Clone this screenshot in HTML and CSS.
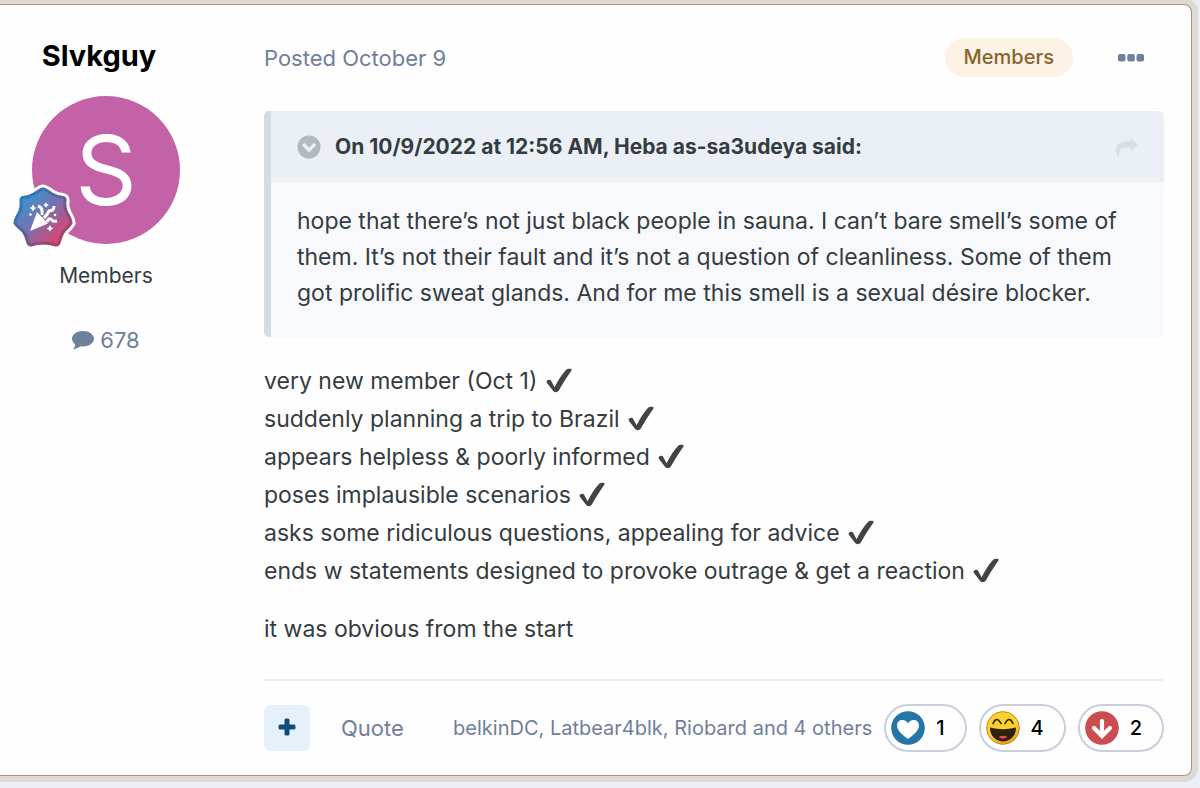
FILE: index.html
```
<!DOCTYPE html>
<html lang="en">
<head>
  <meta charset="UTF-8">
  <meta name="viewport" content="width=device-width, initial-scale=1.0">
  <title>Topic - Forum</title>
  <link rel="stylesheet" href="styles.css">
</head>
<body>
  <!-- Shared icons -->
  <svg class="sprite" aria-hidden="true">
    <symbol id="check" viewBox="0 0 26 26">
      <path d="M1.200 12.500C2.500 11.400 4.400 11.400 5.400 13.200L8.600 19.200C12.500 11.500 16.500 5.500 20.200 1.800C21.500.6 24 .4 25.200 1C25.900 1.500 25.500 2.500 25 3.200C20.500 9.500 16.500 16 13 22.300C11.800 24.500 8.400 25.200 6.800 22.600L1.200 15.200C.4 14 .4 13.200 1.200 12.500Z"/>
    </symbol>
  </svg>

  <article class="post">
    <aside class="author">
      <h3 class="author-name"><a href="#">Slvkguy</a></h3>
      <div class="avatar">
        <a href="#" class="avatar-letter">S</a>
        <svg class="rank" viewBox="0 0 70 70" role="img" aria-label="Rank badge">
          <defs>
            <linearGradient id="rankFill" x1="0.1" y1="0.1" x2="0.85" y2="0.9">
              <stop offset="0" stop-color="#2a9bd8"/>
              <stop offset="0.5" stop-color="#7a70ac"/>
              <stop offset="1" stop-color="#e5406a"/>
            </linearGradient>
            <path id="star" d="M35 9Q37 9 44 14Q49 17 55 17.500Q57 18 57 20Q56 27 59 33Q63 40 63 43Q62 45 56 51Q53 55 51 63Q50 65 48 65Q41 63 35.500 63Q29 63 23 65Q21 65 20 63Q18 55 15 51Q8 45 7 43Q7 40 11 33Q14 27 13 20Q13 18 15 17.500Q21 17 26 14Q33 9 35 9Z" stroke-linejoin="round"/>
          </defs>
          <use href="#star" fill="#fff" stroke="#fff" stroke-width="9"/>
          <use href="#star" fill="url(#rankFill)" stroke="url(#rankFill)" stroke-width="3"/>
          <use href="#star" fill="none" stroke="#243a70" stroke-opacity=".3" stroke-width="3"/>
          <g transform="translate(-1 4)">
            <path d="M30 28L41 39.500L23 47Z" fill="#fff"/>
            <path d="M31 22Q36 23 35 31M47 22Q47 27 42 27Q40 31 37 34M40 38Q42 33 45 36Q46 38 50 37" fill="none" stroke="#fff" stroke-width="3"/>
            <path d="M26 20.500l1.500 2.500 2 1-2 1-1.500 2.500-1.500-2.500-2-1 2-1zM39 18l1 2 2 1-2 1-1 2-1-2-2-1 2-1zM43 41l1.200 2.200 2.200 1.200-2.200 1.200-1.200 2.200-1.200-2.200-2.200-1.200 2.200-1.200z" fill="#fff"/>
            <circle cx="23.500" cy="30.500" r="1.300" fill="#fff"/>
            <circle cx="48" cy="31" r="1.300" fill="#fff"/>
          </g>
        </svg>
      </div>
      <p class="author-group">Members</p>
      <a href="#" class="author-posts">
        <svg width="22" height="20" viewBox="0 0 22 20" aria-hidden="true">
          <path d="M11 1C17 1 22 4.500 22 8.800S17 16.500 11 16.500Q9.500 16.500 8.200 16.300Q5.500 19 1.500 19.300Q1 19 1.500 18.500Q3.200 17 3.200 14.600Q0 12.200 0 8.800C0 4.500 5 1 11 1Z" fill="currentColor"/>
        </svg>
        678
      </a>
    </aside>

    <div class="content">
      <header class="post-head">
        <a href="#" class="date">Posted October 9</a>
        <span class="group-pill">Members</span>
        <button type="button" class="more" aria-label="More options">
          <svg width="26" height="8" viewBox="0 0 26 8" aria-hidden="true">
            <rect width="7.500" height="7.500" rx="2"/>
            <rect x="9.300" width="7.500" height="7.500" rx="2"/>
            <rect x="18.500" width="7.500" height="7.500" rx="2"/>
          </svg>
        </button>
      </header>

      <blockquote class="quote">
        <div class="quote-head">
          <button type="button" class="quote-toggle" aria-label="Collapse quote">
            <svg width="24" height="24" viewBox="0 0 24 24" aria-hidden="true">
              <circle cx="12" cy="12" r="11.500" fill="#b4b9bd"/>
              <path d="M6 9L12 15L18 9" fill="none" stroke="#ebf0f7" stroke-width="3.400"/>
            </svg>
          </button>
          <strong class="quote-cite">On 10/9/2022 at 12:56 AM, Heba as-sa3udeya said:</strong>
          <a href="#" class="quote-link" aria-label="Go to quoted post">
            <svg width="22" height="20" viewBox="0 0 22 20" aria-hidden="true">
              <path d="M14.500.5L21.800 7.500L14.500 14.500V10.500C8 10.200 3 10.500 3.200 19H1.500C.5 16.500 0 14.500 0 12C0 5.500 6 4.200 14.500 4.200Z" fill="#d9dee2"/>
            </svg>
          </a>
        </div>
        <p class="quote-body">hope that there’s not just black people in sauna. I can’t bare smell’s some of them. It’s not their fault and it’s not a question of cleanliness. Some of them got prolific sweat glands. And for me this smell is a sexual désire blocker.</p>
      </blockquote>

      <div class="text">
        <p>
          very new member (Oct 1) <svg class="check"><use href="#check"/></svg><br>
          suddenly planning a trip to Brazil <svg class="check"><use href="#check"/></svg><br>
          appears helpless &amp; poorly informed <svg class="check"><use href="#check"/></svg><br>
          poses implausible scenarios <svg class="check"><use href="#check"/></svg><br>
          asks some ridiculous questions, appealing for advice <svg class="check"><use href="#check"/></svg><br>
          ends w statements designed to provoke outrage &amp; get a reaction <svg class="check"><use href="#check"/></svg>
        </p>
        <p>it was obvious from the start</p>
      </div>

      <footer class="post-foot">
        <button type="button" class="multiquote" aria-label="Multiquote">
          <svg width="18" height="20" viewBox="0 0 18 20" aria-hidden="true">
            <path d="M8 .5h2q1.500 0 1.500 1.500v4.500h4.500q1.500 0 1.500 1.500v2q0 1.500-1.500 1.500h-4.500v4.500q0 1.500-1.500 1.500h-2q-1.500 0-1.500-1.500v-4.500h-4.500q-1.500 0-1.500-1.500v-2q0-1.500 1.500-1.500h4.500v-4.500q0-1.500 1.500-1.500z" fill="#0f4c7d"/>
          </svg>
        </button>
        <a href="#" class="quote-action">Quote</a>
        <a href="#" class="reactors">belkinDC, Latbear4blk, Riobard and 4 others</a>
        <ul class="reactions">
          <li>
            <button type="button" class="reaction">
              <svg width="34" height="34" viewBox="0 0 34 34" role="img" aria-label="Like">
                <circle cx="17" cy="17" r="16.800" fill="#2576a7"/>
                <path d="M17 28C13 25 6 20 6 14.500C6 11 8.500 9 11.300 9C14 9 16 10.500 17 12.500C18 10.500 20 9 22.700 9C25.500 9 28 11 28 14.500C28 20 21 25 17 28Z" fill="#fff"/>
              </svg>
              1
            </button>
          </li>
          <li>
            <button type="button" class="reaction">
              <svg width="34" height="34" viewBox="0 0 34 34" role="img" aria-label="Haha">
                <defs>
                  <linearGradient id="smile" x1=".3" y1="0" x2=".7" y2="1">
                    <stop offset=".55" stop-color="#fdd02a"/>
                    <stop offset="1" stop-color="#ef9a17"/>
                  </linearGradient>
                </defs>
                <circle cx="17" cy="17" r="16.400" fill="url(#smile)" stroke="#a77a2c" stroke-width=".8"/>
                <path d="M7 12.500Q10.500 4.500 15 12.500M19 12.500Q23.500 4.500 27 12.500" fill="none" stroke="#2d2410" stroke-width="1.600" stroke-linecap="round"/>
                <path d="M4 16.500Q17 20 30 16.500C30.500 24 24.500 30.500 17 30.500S3.500 24 4 16.500Z" fill="#2d2410"/>
                <path d="M13 26.500Q13.500 24 17 25Q20.500 24 21 26.500Q17 28.800 13 26.500Z" fill="#f2404f"/>
              </svg>
              4
            </button>
          </li>
          <li>
            <button type="button" class="reaction">
              <svg width="34" height="34" viewBox="0 0 34 34" role="img" aria-label="Downvote">
                <circle cx="17" cy="17" r="16.800" fill="#c84e50"/>
                <path d="M17 10V24M9 17L17 25L25 17" fill="none" stroke="#fff" stroke-width="4.200" stroke-linecap="round"/>
              </svg>
              2
            </button>
          </li>
        </ul>
      </footer>
    </div>
  </article>
</body>
</html>
```
FILE: styles.css
```
* {
  box-sizing: border-box;
}
body {
  margin: 0;
  padding: 4px 8px 12px 0;
  background: #eceef6;
  color: #353c41;
  font-family: Inter, "Liberation Sans", sans-serif;
  font-size: 22px;
  overflow-x: hidden;
}
h3, p, ul, blockquote {
  margin: 0;
  padding: 0;
}
a {
  color: inherit;
  text-decoration: none;
}
button {
  border: none;
  padding: 0;
  background: none;
  font: inherit;
  cursor: pointer;
}
svg {
  display: block;
}
.sprite {
  display: none;
}

.post {
  display: flex;
  gap: 52px;
  padding: 33px 27px 23px 0;
  background: #fefefe;
  border: 1px solid #ab946c;
  border-left: none;
  border-radius: 0 8px 8px 0;
  box-shadow: 0 0 0 6px #dcdad4;
}

/* Author column */
.author {
  flex: 0 0 212px;
  display: flex;
  flex-direction: column;
  align-items: center;
}
.author-name {
  padding-right: 14px;
  color: #000;
  font-size: 29px;
  font-weight: 700;
  line-height: 36px;
}
.avatar {
  position: relative;
  margin-top: 22px;
}
.avatar-letter {
  display: flex;
  align-items: center;
  justify-content: center;
  width: 148px;
  height: 148px;
  border-radius: 50%;
  background: #c462a8;
  color: #fff;
  font-size: 96px;
}
.rank {
  position: absolute;
  left: -24px;
  bottom: -6px;
  width: 70px;
  height: 70px;
}
.author-group {
  margin-top: 17px;
  font-size: 21px;
  line-height: 30px;
}
.author-posts {
  display: flex;
  align-items: center;
  gap: 6px;
  margin-top: 34px;
  color: #6f809b;
  line-height: 30px;
}

/* Post body */
.content {
  flex: 1;
  min-width: 0;
}
.post-head {
  display: flex;
  align-items: center;
}
.date {
  flex: 1;
  color: #6f809b;
}
.group-pill {
  padding: 0 19px;
  border-radius: 20px;
  background: #fdf2e4;
  color: #86652f;
  font-size: 20px;
  font-weight: 500;
  line-height: 39px;
}
.more {
  margin: 0 20px 0 45px;
  fill: #6f809b;
}
.quote {
  margin-top: 34px;
  border-left: 7px solid #d6dbe0;
  border-radius: 5px;
  background: #f7f9fc;
  overflow: hidden;
}
.quote-head {
  display: flex;
  align-items: center;
  gap: 14px;
  min-height: 71px;
  padding: 0 26px;
  background: #ebf0f7;
}
.quote-cite {
  flex: 1;
  font-size: 21px;
  font-weight: 700;
}
.quote-body {
  padding: 21px 26px 26px;
  font-size: 23px;
  line-height: 36px;
}
.text {
  padding: 25px 0 31px;
  font-size: 23px;
  line-height: 38px;
}
.text p + p {
  margin-top: 20px;
}
.check {
  display: inline-block;
  width: 26px;
  height: 26px;
  margin-left: 2px;
  vertical-align: -5px;
  fill: #434343;
}

/* Actions and reactions */
.post-foot {
  display: flex;
  align-items: center;
  padding-top: 23px;
  border-top: 2px solid #eeeeee;
  color: #6f809b;
}
.multiquote {
  display: flex;
  align-items: center;
  justify-content: center;
  width: 46px;
  height: 46px;
  border-radius: 6px;
  background: #e6f0fa;
}
.quote-action {
  flex: 1;
  margin-left: 31px;
}
.reactors {
  font-size: 20px;
}
.reactions {
  display: flex;
  gap: 12px;
  margin-left: 12px;
  list-style: none;
}
.reaction {
  display: flex;
  align-items: center;
  gap: 11px;
  height: 48px;
  padding: 0 20px 0 5px;
  border: 2px solid #c8cfdc;
  border-radius: 24px;
  color: #000;
  font-size: 20px;
  font-weight: 500;
}
```
